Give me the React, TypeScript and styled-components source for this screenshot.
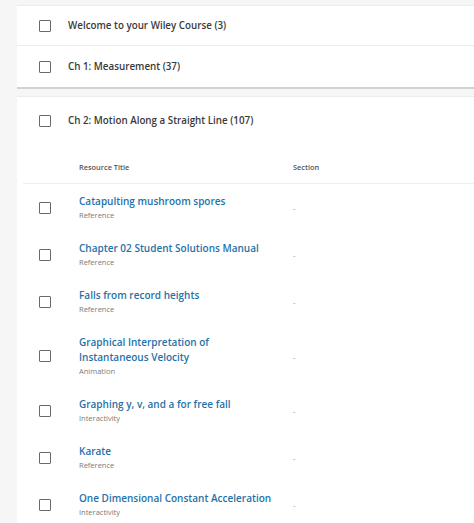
import React from "react";
import styled, { createGlobalStyle } from "styled-components";

const Global = createGlobalStyle`
  html, body { margin: 0; padding: 0; background: #f6f6f6; overflow: hidden; }
  body { font-family: "Open Sans", "Noto Sans", Arial, sans-serif; color: #333; }
`;

const Page = styled.div`
  padding: 5px 0 0 17px;
  display: flex;
  flex-direction: column;
  gap: 9px;
`;

const Card = styled.div`
  background: #fff;
  border-top: 1px solid #ececec;
`;

const TopCard = styled(Card)`
  box-shadow: 0 2px 0 #d2d2d2;
`;

const ChapterRow = styled.div<{ $h: number; $divider?: boolean }>`
  display: flex;
  align-items: center;
  height: ${(p) => p.$h}px;
  padding-left: 22px;
  gap: 17px;
  border-bottom: ${(p) => (p.$divider ? "1px solid #ececec" : "none")};
  box-sizing: border-box;
`;

const Box = styled.span`
  width: 12px;
  height: 12px;
  border: 1.5px solid #6a6a6a;
  border-radius: 1px;
  box-sizing: border-box;
  flex: none;
  background: #fff;
`;

const ChapterTitle = styled.span`
  font-size: 9.8px;
  font-weight: 600;
  color: #3a3a3a;
`;

const Table = styled.div`
  margin-left: 6px;
  padding-top: 6px;
`;

const HeadRow = styled.div`
  display: grid;
  grid-template-columns: 56px 214px 1fr;
  height: 33px;
  align-items: center;
  border-bottom: 1px solid #eeeeee;
`;

const HeadCell = styled.span`
  font-size: 7.4px;
  font-weight: 600;
  color: #555;
`;

const Row = styled.div`
  display: grid;
  grid-template-columns: 56px 214px 1fr;
  align-items: center;
  padding: 10px 0;
`;

const BoxCell = styled.div`
  display: flex;
  padding-left: 16px;
`;

const TitleBlock = styled.div`
  display: flex;
  flex-direction: column;
`;

const ResTitle = styled.span`
  font-size: 10px;
  font-weight: 600;
  line-height: 15px;
  color: #1f72a9;
`;

const ResType = styled.span`
  font-size: 7.5px;
  line-height: 12px;
  color: #7a7a7a;
`;

const Dash = styled.span`
  font-size: 8px;
  color: #999;
`;

const rows: { title: string[]; type: string }[] = [
  { title: ["Catapulting mushroom spores"], type: "Reference" },
  { title: ["Chapter 02 Student Solutions Manual"], type: "Reference" },
  { title: ["Falls from record heights"], type: "Reference" },
  { title: ["Graphical Interpretation of", "Instantaneous Velocity"], type: "Animation" },
  { title: ["Graphing y, v, and a for free fall"], type: "Interactivity" },
  { title: ["Karate"], type: "Reference" },
  { title: ["One Dimensional Constant Acceleration"], type: "Interactivity" },
];

export default function App() {
  return (
    <>
      <Global />
      <Page>
        <TopCard>
          <ChapterRow $h={40} $divider>
            <Box />
            <ChapterTitle>Welcome to your Wiley Course (3)</ChapterTitle>
          </ChapterRow>
          <ChapterRow $h={41}>
            <Box />
            <ChapterTitle>Ch 1: Measurement (37)</ChapterTitle>
          </ChapterRow>
        </TopCard>
        <Card>
          <ChapterRow $h={47}>
            <Box />
            <ChapterTitle>Ch 2: Motion Along a Straight Line (107)</ChapterTitle>
          </ChapterRow>
          <Table>
            <HeadRow>
              <span />
              <HeadCell>Resource Title</HeadCell>
              <HeadCell>Section</HeadCell>
            </HeadRow>
            {rows.map((r) => (
              <Row key={r.title.join(" ")}>
                <BoxCell>
                  <Box />
                </BoxCell>
                <TitleBlock>
                  <ResTitle>
                    {r.title.map((t, i) => (
                      <React.Fragment key={t}>
                        {i > 0 && <br />}
                        {t}
                      </React.Fragment>
                    ))}
                  </ResTitle>
                  <ResType>{r.type}</ResType>
                </TitleBlock>
                <Dash>-</Dash>
              </Row>
            ))}
          </Table>
        </Card>
      </Page>
    </>
  );
}
